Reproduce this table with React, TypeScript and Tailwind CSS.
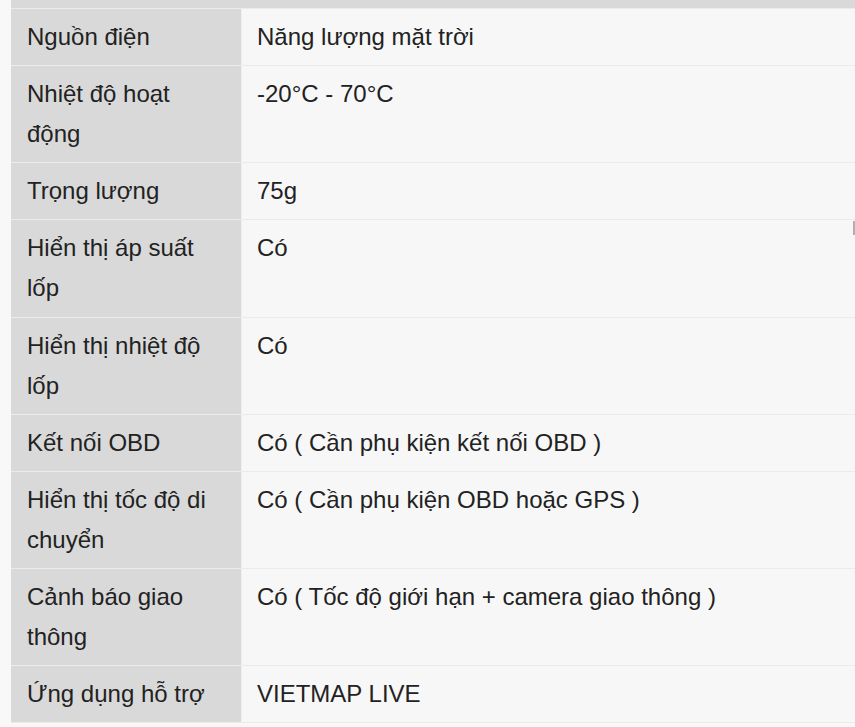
import React from "react";

const rows: [string, string][] = [
  ["Nguồn điện", "Năng lượng mặt trời"],
  ["Nhiệt độ hoạt động", "-20°C - 70°C"],
  ["Trọng lượng", "75g"],
  ["Hiển thị áp suất lốp", "Có"],
  ["Hiển thị nhiệt độ lốp", "Có"],
  ["Kết nối OBD", "Có ( Cần phụ kiện kết nối OBD )"],
  ["Hiển thị tốc độ di chuyển", "Có ( Cần phụ kiện OBD hoặc GPS )"],
  ["Cảnh báo giao thông", "Có ( Tốc độ giới hạn + camera giao thông )"],
  ["Ứng dụng hỗ trợ", "VIETMAP LIVE"],
];

export default function App() {
  return (
    <div
      className="relative w-[855px] h-[727px] overflow-hidden bg-[#f8f8f8] pl-[11px]"
      style={{ fontFamily: '"Liberation Sans", Arial, sans-serif' }}
    >
      <div className="flex flex-col text-[24px] leading-[40.1px] text-[#222]">
        <div className="h-[9px] bg-[#d9d9d9] border-b border-[#ebebeb]" />
        {rows.map(([k, v], i) => (
          <div key={i} className="flex border-b border-[#ebebeb]">
            <div className="w-[231px] shrink-0 bg-[#d9d9d9] border-r border-[#eeeeee] px-[16px] py-[8px]">
              {k}
            </div>
            <div className="flex-1 bg-[#f7f7f7] px-[15px] py-[8px]">{v}</div>
          </div>
        ))}
      </div>
      <div className="absolute right-0 top-[221px] w-[2px] h-[14px] bg-[#b0b0b0]" />
    </div>
  );
}
